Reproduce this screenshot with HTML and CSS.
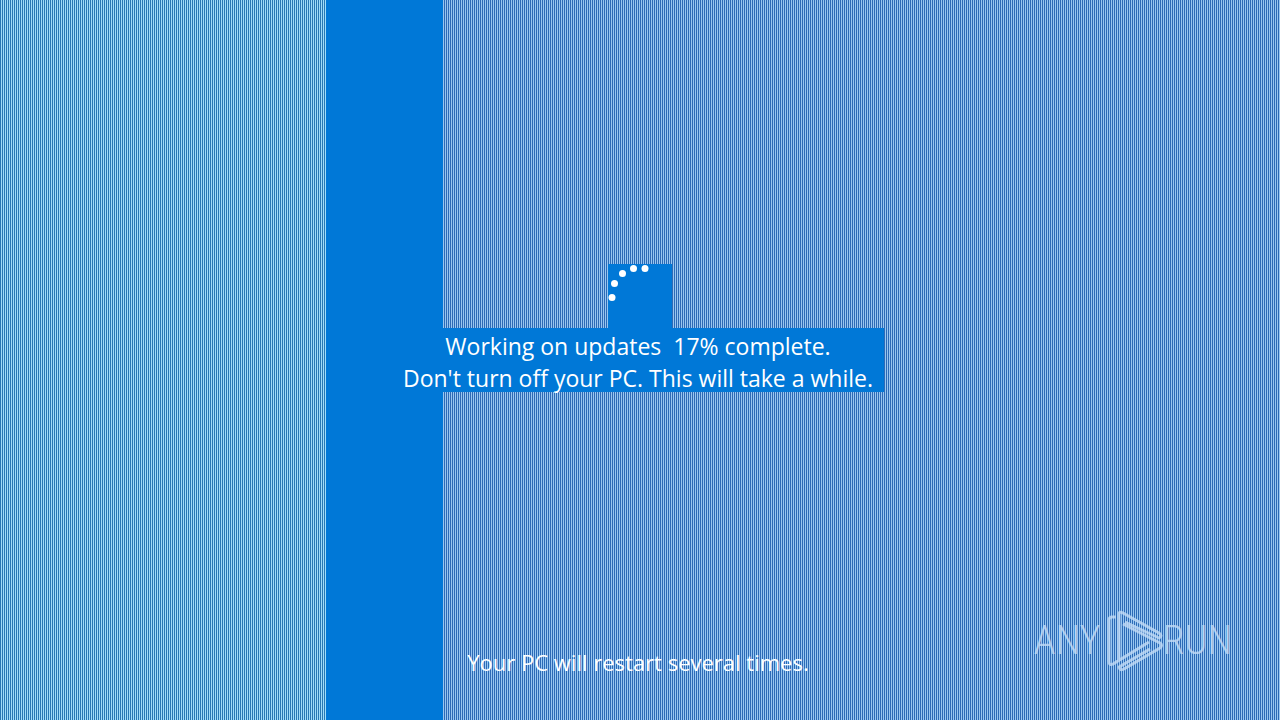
FILE: index.html
```html
<!DOCTYPE html>
<html lang="en">
<head>
<meta charset="utf-8">
<title>Working on updates</title>
<link rel="stylesheet" href="styles.css">
</head>
<body>
<div class="backdrop"><div class="left"></div><div class="band"></div><div class="right"></div></div>
<main class="screen">
  <section class="progress">
    <svg class="spinner" viewBox="0 0 64 64" role="img" aria-label="Loading">
      <circle cx="4" cy="33.500" r="3.500"/><circle cx="6.500" cy="19.500" r="3.500"/><circle cx="14.500" cy="9.500" r="3.500"/><circle cx="25.500" cy="4.500" r="3.500"/><circle cx="37" cy="4.500" r="3.500"/>
    </svg>
    <div class="status">
      <p>Working on updates&nbsp; 17% complete.</p>
      <p>Don't turn off your PC. This will take a while.</p>
    </div>
  </section>
  <p class="restart">Your PC will restart several times.</p>
</main>
<div class="watermark">
  <span>ANY</span>
  <svg class="mark" viewBox="0 0 58 62" aria-hidden="true">
    <path d="M14 50V4Q14 1 18 3L54 23Q58 26 54 28L20 12M18 14L55 33Q58 35 55 38L19 59Q15 61 14 57L45 39M11 7H7Q4 7 4 10V51Q4 56 8 54L44 32"/>
  </svg>
  <span>RUN</span>
</div>
</body>
</html>
```
FILE: styles.css
```css
* { box-sizing: border-box; }
body {
  margin: 0;
  min-height: 100vh;
  background: #0078d7;
  color: #fff;
  font-family: "Open Sans", "Noto Sans", sans-serif;
  font-size: 23px;
  line-height: 32px;
}
p { margin: 0; }
.backdrop { position: absolute; inset: 0; display: flex; }
.left,
.right { background-size: 2px 2px; }
.left { flex: 0 0 326px; background-image: linear-gradient(90deg, #2878b4 50%, #a0dcf8 50%); }
.band { flex: 0 0 117px; }
.right { flex: 1; background-image: linear-gradient(90deg, #98c6f0 50%, #2c6ab6 50%); }
.screen {
  position: relative;
  min-height: 100vh;
  display: flex;
  flex-direction: column;
  align-items: center;
  padding: 264px 0 42px;
}
.progress { display: flex; flex-direction: column; align-items: center; }
.spinner { width: 64px; height: 64px; background: #0078d7; fill: #fff; }
.status {
  width: 488px;
  height: 64px;
  padding: 2px 4px 0 0;
  background: #0078d7;
  text-align: center;
  white-space: nowrap;
}
.restart { margin-top: auto; padding-right: 4px; font-size: 22px; }
.watermark {
  position: absolute;
  right: 48px;
  bottom: 48px;
  display: flex;
  align-items: center;
  color: #c4dcf6;
  font-family: "Roboto Condensed", "Liberation Sans Narrow", Roboto, sans-serif;
  font-size: 40px;
  font-weight: 300;
  line-height: 62px;
  opacity: .8;
}
.mark { width: 58px; height: 62px; margin-left: 4px; fill: none; stroke: #c4dcf6; stroke-width: 3; stroke-linejoin: round; }
```
